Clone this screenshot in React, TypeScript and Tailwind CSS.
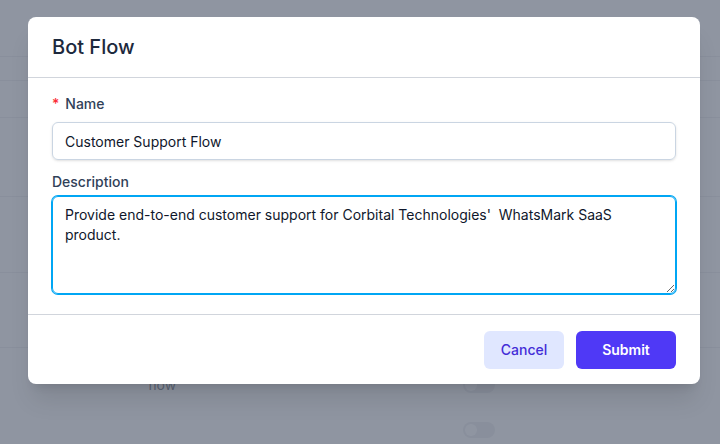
import React from 'react';

const BackgroundPage: React.FC = () => {
  return (
    <div className="flex flex-col w-full h-full bg-white">
      <div className="h-[57px] border-b border-gray-200" />
      <div className="h-[24px] border-b border-gray-200" />
      <div className="h-[37px] border-b border-gray-200" />
      <div className="h-[79px] border-b border-gray-200" />
      <div className="h-[76px] border-b border-gray-200" />
      <div className="h-[75px] border-b border-gray-200" />
      {/* rows peeking out below the dialog */}
      <div className="flex flex-col gap-[25px] pt-[27px]">
        <div className="flex items-center h-[20px]">
          <span className="w-[463px] pl-[148px] text-sm text-gray-700">flow</span>
          <div className="w-8 h-4 rounded-full bg-gray-200 p-[2px] flex">
            <div className="w-3 h-3 rounded-full bg-white" />
          </div>
        </div>
        <div className="flex items-center h-[20px]">
          <span className="w-[463px]" />
          <div className="w-8 h-4 rounded-full bg-gray-200 p-[2px] flex">
            <div className="w-3 h-3 rounded-full bg-white" />
          </div>
        </div>
      </div>
    </div>
  );
};

const BotFlowDialog: React.FC = () => {
  return (
    <div className="absolute top-[17px] left-[28px] w-[672px] bg-white rounded-lg shadow-xl flex flex-col">
      {/* Header */}
      <div className="h-[61px] px-6 flex items-center border-b border-gray-300">
        <h2 className="text-xl font-medium text-slate-800">Bot Flow</h2>
      </div>

      {/* Body */}
      <div className="px-6 pt-4 pb-5 flex flex-col">
        <label className="flex items-center gap-[6px] text-sm font-medium text-slate-700 leading-5">
          <span className="text-red-500">*</span>
          <span>Name</span>
        </label>
        <input
          readOnly
          value="Customer Support Flow"
          className="mt-2 h-[38px] w-full rounded-md border border-slate-300 px-3 text-sm text-slate-900 shadow-sm outline-none"
        />

        <label className="mt-3 text-sm font-medium text-slate-700 leading-5">Description</label>
        <textarea
          readOnly
          rows={4}
          value="Provide end-to-end customer support for Corbital Technologies'  WhatsMark SaaS product."
          className="mt-1 h-[98px] w-full rounded-md border border-sky-500 ring-1 ring-sky-500 px-3 py-2 text-sm leading-5 text-slate-900 outline-none"
        />
      </div>

      {/* Footer */}
      <div className="border-t border-gray-300 px-6 pt-4 pb-[15px] flex justify-end gap-3">
        <button className="h-[38px] w-20 rounded-md bg-indigo-100 text-sm font-medium text-indigo-700">
          Cancel
        </button>
        <button className="h-[38px] w-[100px] rounded-md bg-indigo-600 text-sm font-semibold text-white">
          Submit
        </button>
      </div>
    </div>
  );
};

export default function App() {
  return (
    <div
      className="relative w-[720px] h-[444px] overflow-hidden"
      style={{ fontFamily: 'Inter, "Noto Sans", sans-serif' }}
    >
      <BackgroundPage />
      <div className="absolute inset-0 bg-gray-500/75" />
      <BotFlowDialog />
    </div>
  );
}
